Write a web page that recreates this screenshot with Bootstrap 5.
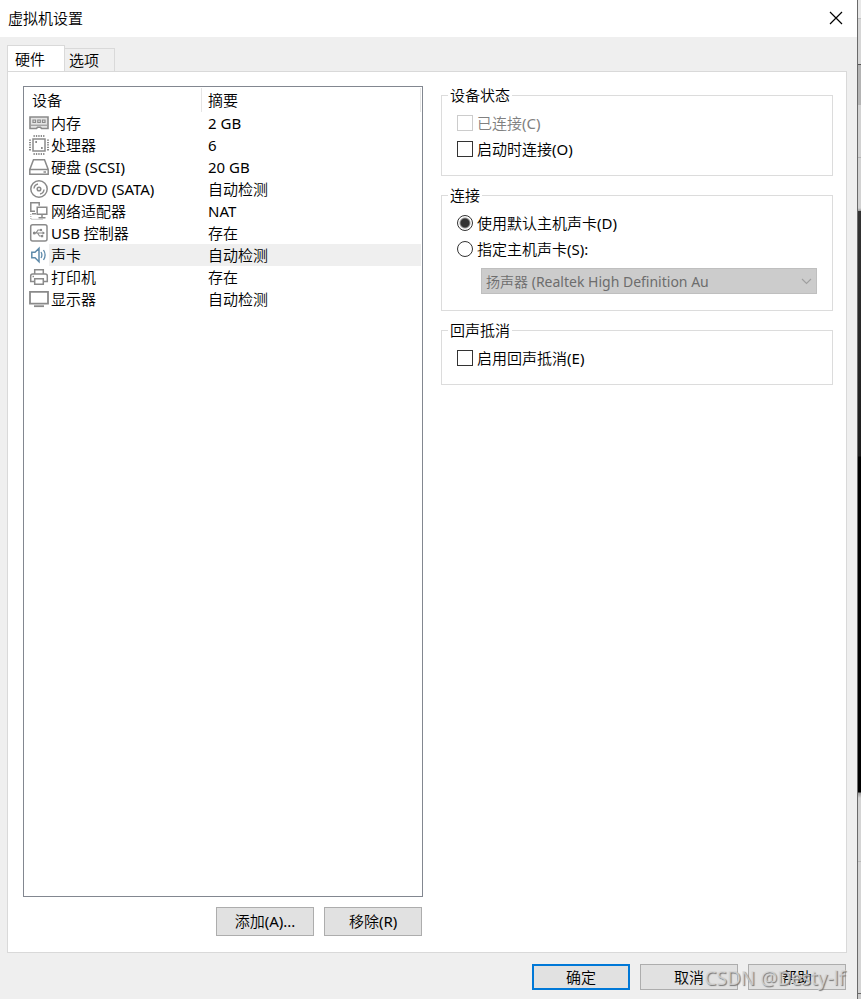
<!DOCTYPE html>
<html lang="zh-CN">
<head>
<meta charset="utf-8">
<meta name="viewport" content="width=device-width, initial-scale=1">
<title>虚拟机设置</title>
<link href="https://cdn.jsdelivr.net/npm/bootstrap@5.3.0/dist/css/bootstrap.min.css" rel="stylesheet">
<style>
body { font: 400 15px/19px "Noto Sans", "Noto Sans CJK SC DemiLight", "Noto Sans CJK SC", sans-serif; color: #000; background: #efefef; }
.backdrop-edge { width: 4px; border-left: 1px solid #6a6a6a;
  background: linear-gradient(#e8e8e8 0 18px, #c0c0c0 18px 19px, #d6d6d6 19px 64px, #555 64px 65px, #b4b4b4 65px 105px, #d2d2d2 105px 157px, #b4b4b4 157px 158px, #d2d2d2 158px 208px, #999 211px, #333 211px, #1c1c1c 456px, #000 457px 792px, #999 793px, #d4d4d4 798px 861px, #bbb 861px 862px, #d4d4d4 862px 993px, #666 993px 994px, #ccc 994px); }
.title-bar { height: 37px; padding: 0 14px 1px 8px; }
.close-x { width: 14px; height: 14px; line-height: 0; }
.tab-strip { padding: 9px 7px 0; height: 34px; }
.tab-strip .nav-link { color: #000; border: 1px solid #d9d9d9; border-bottom: 0; border-radius: 0; margin: 0; background: #efefef; padding: 1px 15px 0 4px; height: 23px; font-weight: inherit; line-height: 19px; }
.tab-strip .nav-link.active { background: #fff; height: 26px; width: 58px; padding: 2px 19px 0 7px; position: relative; z-index: 1; }
.tab-strip .nav-link:not(.active) { border-left: 0; }
.panel { margin: 0 10px 0 7px; padding: 14px 13px 16px 15px; background: #fff; border: 1px solid #d9d9d9; display: grid; grid-template-columns: 50fr 49fr; column-gap: 18px; }
.device-box { border: 1px solid #828790; padding: 1px 1px 0 0; margin-bottom: 10px; }
.device-table { table-layout: fixed; width: 100%; border-collapse: separate; border-spacing: 0; }
.device-table th { font-weight: inherit; height: 24px; padding: 0 0 0 8px; border-right: 1px solid #e5e5e5; }
.device-table th + th { padding-left: 6px; }
.device-table td { height: 22px; padding: 0 0 0 6px; line-height: 19px; white-space: nowrap; }
.device-table td:nth-child(1) { padding: 0 0 0 5px; line-height: 0; }
.device-table td:nth-child(2) { padding: 0 0 0 2px; }
.device-table .chosen td:not(:first-child) { background: #efefef; }
.c-icon { width: 25px; } .c-name { width: 153px; }
.device-table svg { width: 20px; height: 20px; fill: none; stroke: #8a8a8a; stroke-width: 1.5; }
.btn-line { gap: 10px; }
.add-row { margin-right: 1px; }
.win-btn { width: 98px; height: 26px; padding: 0; border: 1px solid #adadad; border-radius: 0; background: #e1e1e1; color: #000; font-size: 15px; font-weight: inherit; line-height: 19px; }
.win-btn.tall { height: 29px; }
.win-btn.default-btn { border: 2px solid #0078d7; }
.group-box { border: 1px solid #dcdcdc; padding: 5px 15px 13px; margin-bottom: 10px; }
.group-box legend { float: none; width: auto; font-size: 15px; line-height: 19px; margin: 0 0 0 -9px; padding: 0 2px; }
.option-row { display: flex; align-items: center; gap: 4px; height: 26px; }
.option-row .form-check-input { width: 16px; height: 16px; margin: 0; border: 1px solid #333; background-color: #fff; flex: none; }
.option-row .form-check-input[type=checkbox] { border-radius: 0; }
.option-row .form-check-input[type=radio]:checked { background-image: radial-gradient(circle, #333 0 4px, #fff 6px); }
.option-row .form-check-input:disabled { border-color: #ccc; opacity: 1; }
.option-row .form-check-input:disabled ~ label { color: #808080; opacity: 1; }
.sound-pick { display: grid; align-items: center; margin: 6px 0 3px 24px; }
.sound-pick > * { grid-area: 1 / 1; }
.sound-pick select { height: 26px; padding: 0 24px 0 4px; font-size: 14px; font-weight: inherit; line-height: 19px; border: 1px solid #bfbfbf; border-radius: 0; background: #ccc; color: #6d6d6d; opacity: 1; }
.sound-pick select:disabled { background: #ccc; }
.sound-pick svg { justify-self: end; margin-right: 5px; pointer-events: none; }
.bottom-bar { padding: 11px 11px 9px; }
.watermark { position: absolute; right: 16px; bottom: 8px; font-size: 19px; font-weight: 400; line-height: 26px; color: rgba(215,215,215,.8); text-shadow: 1px 1px 1px #777; pointer-events: none; }
</style>
<script src="https://cdn.jsdelivr.net/npm/bootstrap@5.3.0/dist/js/bootstrap.bundle.min.js"></script>
</head>
<body>
<div class="d-flex min-vh-100 position-relative">
<main class="d-flex flex-column flex-grow-1">
  <header class="title-bar d-flex align-items-center justify-content-between bg-white">
    <span>虚拟机设置</span>
    <button type="button" class="close-x btn p-0 border-0" aria-label="关闭"><svg width="14" height="14" viewBox="0 0 14 14" stroke="#000" stroke-width="1.2"><path d="M1 1l12 12M13 1L1 13"/></svg></button>
  </header>
  <div class="tab-strip nav d-flex align-items-end flex-nowrap" role="tablist">
    <button type="button" class="nav-link active" role="tab" aria-selected="true">硬件</button>
    <button type="button" class="nav-link" role="tab" aria-selected="false">选项</button>
  </div>
  <div class="panel flex-grow-1">
    <section class="d-flex flex-column">
      <div class="device-box flex-grow-1">
        <table class="device-table">
          <colgroup><col class="c-icon"><col class="c-name"><col></colgroup>
          <thead><tr><th colspan="2" scope="col">设备</th><th scope="col">摘要</th></tr></thead>
          <tbody>
            <tr><td><svg viewBox="0 0 20 20"><path d="M1 4h18v11.5H12.5l-1-1.3h-3l-1 1.3H1z" fill="#e4e4e4" stroke-width="1.6"/><path d="M4 7h2.5v2.5H4zM8.8 7h2.5v2.5H8.8zM13.5 7H16v2.5h-2.5z" stroke-width="1.2"/><path d="M2 12.2h16" stroke-width="1"/></svg></td><td>内存</td><td>2 GB</td></tr>
            <tr><td><svg viewBox="0 0 20 20"><path d="M4 4h12v12H4z"/><path d="M4.5 1h11.5M4.5 19h11.5M1 4.5v11.5M19 4.5v11.5" stroke-width="2" stroke-dasharray="1.3 1.1"/><path d="M6.3 7h1.7M12 13h1.7" stroke-width="1.8"/></svg></td><td>处理器</td><td>6</td></tr>
            <tr><td><svg viewBox="0 0 20 20"><path d="M4.5 2.8h11l3.7 9.7v4.7H.8v-4.7zM.8 12.5h18.4M14.5 15h2.5"/></svg></td><td>硬盘 (SCSI)</td><td>20 GB</td></tr>
            <tr><td><svg viewBox="0 0 20 20"><circle cx="10" cy="10" r="8.2"/><circle cx="10" cy="10" r="1.8"/><path d="M5 9.5A5 5 0 0 1 9 5M15 10.5A5 5 0 0 1 11 15" stroke-width="1.4"/></svg></td><td>CD/DVD (SATA)</td><td>自动检测</td></tr>
            <tr><td><svg viewBox="0 0 20 20"><path d="M6 10.3H1.8V1.8h8.4v3M8.2 6.2h9.6v7.1H8.2zM13 13.5v3M9.5 16.7h7M3 12.8h4"/><path d="M1.8 13v5.3h12" stroke="#aaa" stroke-width="1.2" stroke-dasharray="1 1"/></svg></td><td>网络适配器</td><td>NAT</td></tr>
            <tr><td><svg viewBox="0 0 20 20"><rect x="1.7" y="1.7" width="16.3" height="16.3" rx="2"/><path d="M5 10h10M7 10l2-3h2.5M8.5 10l2 3H13" stroke-width="1.2"/><g fill="#888" stroke="none"><circle cx="5.3" cy="10" r="1.5"/><circle cx="12" cy="7" r="1.2"/><path d="M12 12h2.2v2.2H12zM13.5 8.2l2.5 1.8-2.5 1.8z"/></g></svg></td><td>USB 控制器</td><td>存在</td></tr>
            <tr class="chosen"><td><svg viewBox="0 0 20 20"><g stroke="#5f8bab" stroke-width="1.5"><path d="M2.8 7.2H6l4-4v13.6l-4-4H2.8z"/><path d="M12 7q1.8 3 0 6M14.5 5q3.2 5 0 10" stroke-width="1.3"/></g></svg></td><td>声卡</td><td>自动检测</td></tr>
            <tr><td><svg viewBox="0 0 20 20"><path d="M5.7 7V2.8h8.6V7M5.5 14.5H1.7V9q0-2 2-2h12.6q2 0 2 2v5.5h-3.8M5.7 11.7h8.6v5.5H5.7zM3.5 9.5h1.5"/></svg></td><td>打印机</td><td>存在</td></tr>
            <tr><td><svg viewBox="0 0 20 20"><path d="M1 2.8h18v11.8H1z" stroke-width="1.8"/><path d="M5 17.2h10" stroke-width="1.8"/></svg></td><td>显示器</td><td>自动检测</td></tr>
          </tbody>
        </table>
      </div>
      <div class="d-flex justify-content-end btn-line add-row">
        <button type="button" class="btn win-btn tall">添加(A)...</button>
        <button type="button" class="btn win-btn tall">移除(R)</button>
      </div>
    </section>
    <section>
      <fieldset class="group-box">
        <legend>设备状态</legend>
        <div class="option-row"><input class="form-check-input" type="checkbox" id="connected" disabled><label for="connected">已连接(C)</label></div>
        <div class="option-row"><input class="form-check-input" type="checkbox" id="at-start"><label for="at-start">启动时连接(O)</label></div>
      </fieldset>
      <fieldset class="group-box">
        <legend>连接</legend>
        <div class="option-row"><input class="form-check-input" type="radio" name="host-card" id="card-default" checked><label for="card-default">使用默认主机声卡(D)</label></div>
        <div class="option-row"><input class="form-check-input" type="radio" name="host-card" id="card-named"><label for="card-named">指定主机声卡(S):</label></div>
        <div class="sound-pick">
          <select class="form-select" aria-label="指定主机声卡" disabled><option>扬声器 (Realtek High Definition Au</option></select>
          <svg width="11" height="7" viewBox="0 0 11 7" fill="none" stroke="#a0a0a0" stroke-width="1.1"><path d="M1 1l4.5 4.5L10 1"/></svg>
        </div>
      </fieldset>
      <fieldset class="group-box">
        <legend>回声抵消</legend>
        <div class="option-row"><input class="form-check-input" type="checkbox" id="echo"><label for="echo">启用回声抵消(E)</label></div>
      </fieldset>
    </section>
  </div>
  <footer class="bottom-bar d-flex justify-content-end btn-line">
    <button type="button" class="btn win-btn default-btn">确定</button>
    <button type="button" class="btn win-btn">取消</button>
    <button type="button" class="btn win-btn">帮助</button>
  </footer>
</main>
<div class="backdrop-edge flex-shrink-0"></div>
<div class="watermark">CSDN @Desty-lf</div>
</div>
</body>
</html>
